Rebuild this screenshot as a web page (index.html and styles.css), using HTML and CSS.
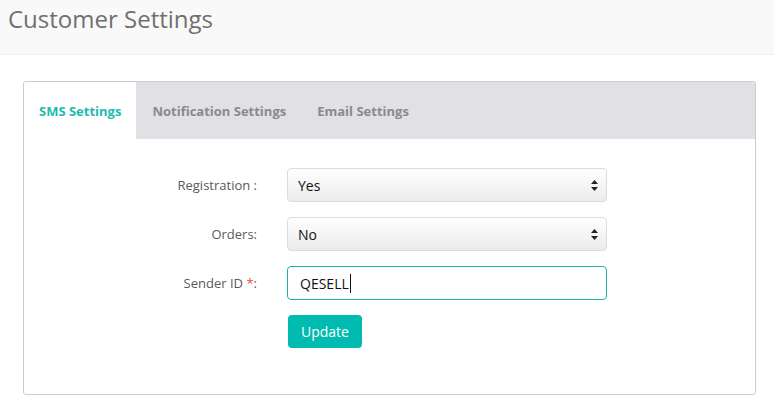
FILE: index.html
```html
<!DOCTYPE html>
<html lang="en">
<head>
    <meta charset="UTF-8">
    <meta name="viewport" content="width=device-width, initial-scale=1.0">
    <title>Customer Settings</title>
    <link rel="stylesheet" href="styles.css">
</head>
<body>
    <header class="page-header">
        <h1>Customer Settings</h1>
    </header>

    <div class="card">
        <nav class="tabs">
            <a href="#" class="tab active">SMS Settings</a>
            <a href="#" class="tab">Notification Settings</a>
            <a href="#" class="tab">Email Settings</a>
        </nav>

        <form class="settings-form">
            <label class="form-label">Registration :</label>
            <div class="select-box">
                <span>Yes</span>
                <svg class="arrows" width="7" height="11" viewBox="0 0 7 11"><path d="M3.5 0 L7 4 H0 Z M3.5 11 L0 7 H7 Z" fill="#222"/></svg>
            </div>

            <label class="form-label">Orders:</label>
            <div class="select-box">
                <span>No</span>
                <svg class="arrows" width="7" height="11" viewBox="0 0 7 11"><path d="M3.5 0 L7 4 H0 Z M3.5 11 L0 7 H7 Z" fill="#222"/></svg>
            </div>

            <label class="form-label">Sender ID <span class="required">*</span>:</label>
            <div class="text-input">QESELL<span class="caret"></span></div>

            <div></div>
            <div><button type="button" class="btn-update">Update</button></div>
        </form>
    </div>
</body>
</html>
```

FILE: styles.css
```css
body {
    margin: 0;
    font-family: 'Open Sans', sans-serif;
    background: #fff;
    color: #333;
}

.page-header {
    background-color: #f9f9f9;
    border-bottom: 1px solid #eee;
    height: 55px;
    box-sizing: border-box;
    padding: 0 8px;
}

.page-header h1 {
    margin: 0;
    font-size: 24px;
    font-weight: 400;
    line-height: 37px;
    color: #707070;
}

.card {
    margin: 26px 18px 0 23px;
    border: 1px solid #ccc;
    border-radius: 3px;
    overflow: hidden;
}

.tabs {
    display: flex;
    background-color: #e0e0e5;
    height: 57px;
}

.tab {
    display: flex;
    align-items: center;
    padding: 0 15px;
    margin-right: 1px;
    font-size: 13px;
    font-weight: 700;
    color: #8a8a8a;
    text-decoration: none;
}

.tab.active {
    background-color: #fff;
    color: #1cbcb0;
}

.settings-form {
    display: grid;
    grid-template-columns: 233px 320px;
    column-gap: 30px;
    row-gap: 15px;
    align-items: center;
    padding: 29px 0 46px;
}

.form-label {
    text-align: right;
    font-size: 13px;
    color: #5a5a5a;
}

.required {
    color: #e74c3c;
}

.select-box {
    display: flex;
    align-items: center;
    justify-content: space-between;
    height: 34px;
    box-sizing: border-box;
    padding: 0 8px 0 10px;
    border: 1px solid #dcdcdc;
    border-radius: 4px;
    background: linear-gradient(to bottom, #ffffff, #ebebeb);
    font-size: 14px;
    color: #111;
}

.text-input {
    display: flex;
    align-items: center;
    height: 34px;
    box-sizing: border-box;
    padding: 0 12px;
    border: 1px solid #1fb3ae;
    border-radius: 4px;
    font-size: 14px;
    color: #111;
}

.caret {
    display: inline-block;
    width: 1px;
    height: 19px;
    background: #111;
    margin-left: 1px;
}

.btn-update {
    margin-left: 1px;
    background-color: #00bcb0;
    color: #fff;
    border: none;
    border-radius: 4px;
    height: 33px;
    padding: 0 13px;
    font-family: 'Open Sans', sans-serif;
    font-size: 14px;
    cursor: pointer;
}
```
